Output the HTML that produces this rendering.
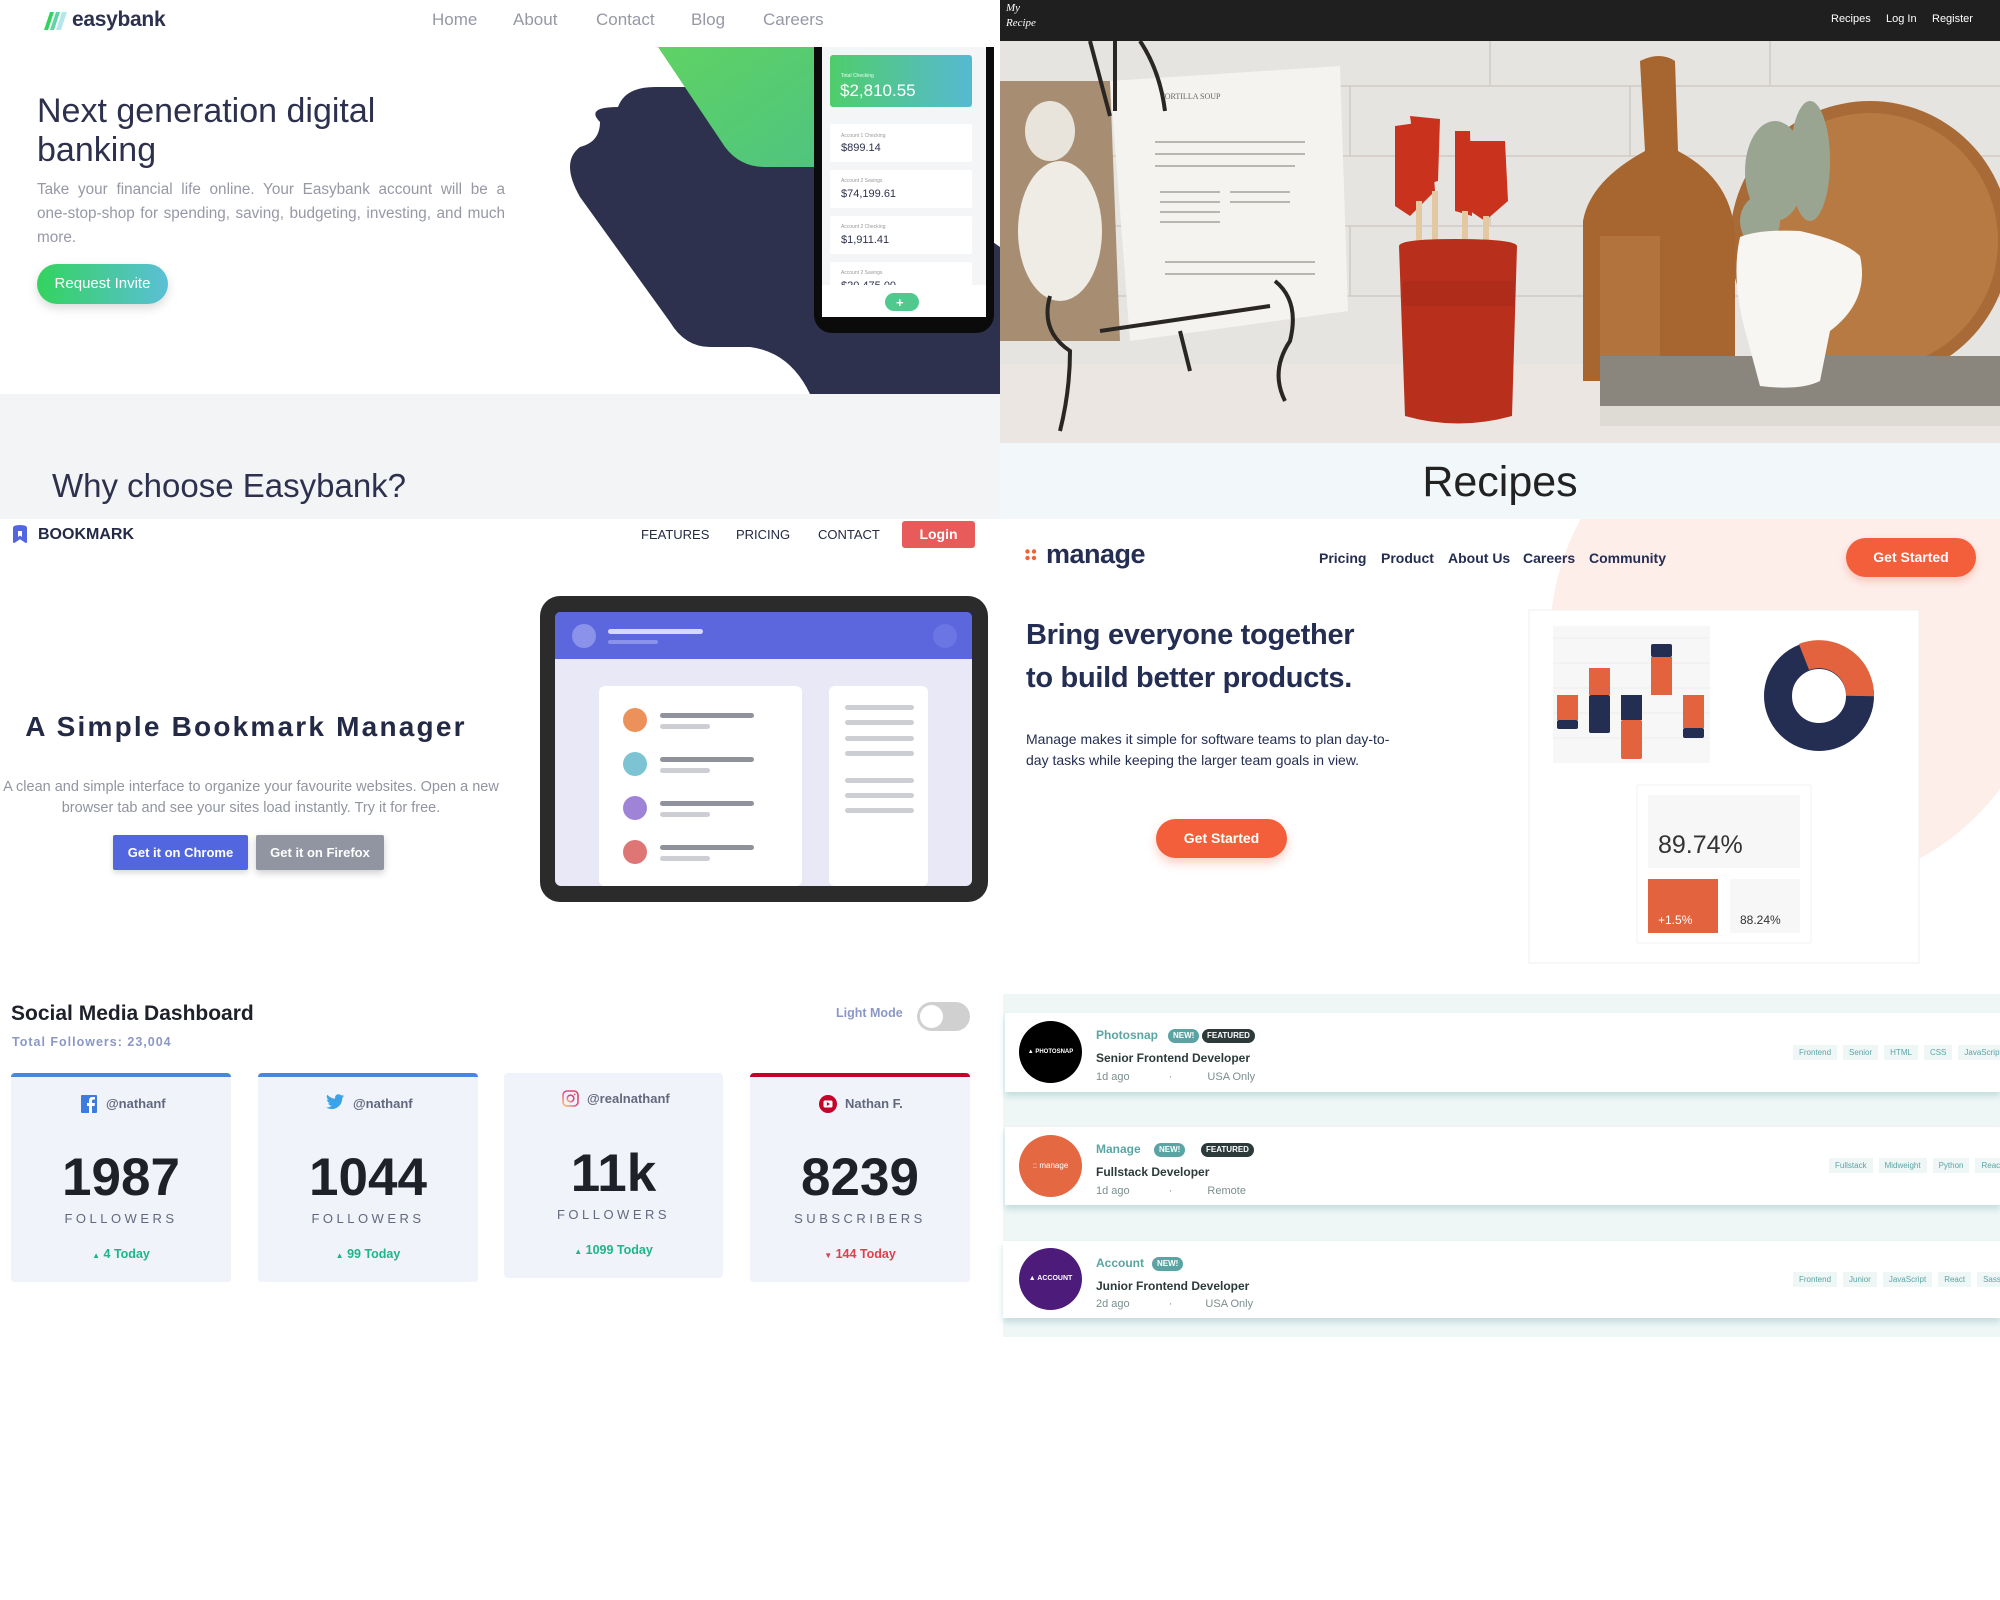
<!DOCTYPE html>
<html><head><meta charset="utf-8"><style>
*{margin:0;padding:0;box-sizing:border-box}
body{width:2000px;height:1600px;position:relative;background:#fff;font-family:"Liberation Sans",sans-serif;overflow:hidden}
.a{position:absolute;white-space:nowrap}
</style></head><body>

<!-- EASYBANK -->
<div class="a" style="left:0;top:0;width:1000px;height:394px;background:#fff"></div>
<svg class="a" style="left:40px;top:11px" width="32" height="20"><polygon points="4,19 10,1 14,1 8,19" fill="#33d35e"/><polygon points="10,19 16,1 20,1 14,19" fill="#5fd3a5"/><polygon points="16,19 22,1 27,1 21,19" fill="#b5e6ea"/></svg>
<div class="a" style="left:72px;top:8px;font-size:21px;font-weight:bold;color:#2d314d;letter-spacing:-0.3px">easybank</div>
<div class="a" style="left:432px;top:10px;font-size:17px;color:#9698a6">Home</div>
<div class="a" style="left:513px;top:10px;font-size:17px;color:#9698a6">About</div>
<div class="a" style="left:596px;top:10px;font-size:17px;color:#9698a6">Contact</div>
<div class="a" style="left:691px;top:10px;font-size:17px;color:#9698a6">Blog</div>
<div class="a" style="left:763px;top:10px;font-size:17px;color:#9698a6">Careers</div>
<div class="a" style="left:37px;top:92px;font-size:34px;line-height:39px;color:#2d314d;white-space:normal;width:420px">Next generation digital banking</div>
<div class="a" style="left:37px;top:178px;font-size:15.3px;line-height:24px;color:#9698a6;white-space:normal;width:468px;text-align:justify">Take your financial life online. Your Easybank account will be a one&#8209;stop&#8209;shop for spending, saving, budgeting, investing, and much more.</div>
<div class="a" style="left:37px;top:264px;width:131px;height:40px;border-radius:20px;background:linear-gradient(90deg,#33d35e,#5bbfd6);color:#fff;font-size:15px;line-height:40px;text-align:center;box-shadow:0 4px 10px rgba(0,0,0,.15)">Request Invite</div>
<svg class="a" style="left:560px;top:47px" width="440" height="348">
<path d="M58,60 Q65,40 95,40 L210,40 Q250,40 270,80 L440,200 L440,347 L250,347 Q230,305 190,300 L150,300 Q125,300 110,275 L20,150 Q0,115 20,100 Q40,95 40,75 Q25,60 58,60 Z" fill="#2d314d"/>
<path d="M98,0 L260,0 L262,120 L205,120 Q180,120 165,100 Z" fill="url(#g1)"/>
<defs><linearGradient id="g1" x1="0" y1="0" x2="1" y2="1"><stop offset="0" stop-color="#5fd264"/><stop offset="1" stop-color="#4fc47f"/></linearGradient><linearGradient id="g2" x1="0" x2="1"><stop offset="0" stop-color="#4fcd6b"/><stop offset="1" stop-color="#56b9d3"/></linearGradient></defs>
<rect x="254" y="-20" width="180" height="306" rx="18" fill="#0b0b0b"/>
<rect x="262" y="-20" width="164" height="290" rx="12" fill="#f4f5f7"/>
<rect x="270" y="8" width="142" height="52" rx="3" fill="url(#g2)"/>
<text x="281" y="30" font-size="5" fill="#e8fff0" font-family="Liberation Sans">Total Checking</text>
<text x="280" y="49" font-size="17" fill="#fff" font-family="Liberation Sans">$2,810.55</text>
<rect x="270" y="77" width="142" height="38" rx="2" fill="#fff"/><text x="281" y="90" font-size="5" fill="#999">Account 1 Checking</text><text x="281" y="104" font-size="11" fill="#2d314d">$899.14</text>
<rect x="270" y="123" width="142" height="38" rx="2" fill="#fff"/><text x="281" y="135" font-size="5" fill="#999">Account 2 Savings</text><text x="281" y="150" font-size="11" fill="#2d314d">$74,199.61</text>
<rect x="270" y="169" width="142" height="38" rx="2" fill="#fff"/><text x="281" y="181" font-size="5" fill="#999">Account 2 Checking</text><text x="281" y="196" font-size="11" fill="#2d314d">$1,911.41</text>
<rect x="270" y="215" width="142" height="30" rx="2" fill="#fff"/><text x="281" y="227" font-size="5" fill="#999">Account 2 Savings</text><text x="281" y="242" font-size="11" fill="#2d314d">$20,475.00</text>
<rect x="262" y="238" width="164" height="32" fill="#fff"/>
<rect x="325" y="246" width="34" height="18" rx="9" fill="#4fc98e"/><text x="336" y="260" font-size="13" fill="#fff" font-weight="bold">+</text>
</svg>
<div class="a" style="left:0;top:394px;width:1000px;height:125px;background:#f3f4f6"></div>
<div class="a" style="left:52px;top:467px;font-size:33px;color:#2d314d">Why choose Easybank?</div>

<!-- RECIPES -->
<div class="a" style="left:1000px;top:0;width:1000px;height:41px;background:#1f1f1f"></div>
<div class="a" style="left:1006px;top:1px;font-family:'Liberation Serif',serif;font-style:italic;font-size:11px;line-height:15px;color:#fff;white-space:normal;width:30px">My<br>Recipe</div>
<div class="a" style="left:1831px;top:13px;font-size:11px;color:#fff">Recipes</div>
<div class="a" style="left:1886px;top:13px;font-size:11px;color:#fff">Log In</div>
<div class="a" style="left:1932px;top:13px;font-size:11px;color:#fff">Register</div>
<svg class="a" style="left:1000px;top:41px" width="1000" height="402">
<rect width="1000" height="402" fill="#e6e4e0"/>
<g stroke="#cfcac4" stroke-width="1.5"><line x1="0" y1="45" x2="1000" y2="45"/><line x1="0" y1="115" x2="1000" y2="115"/><line x1="0" y1="185" x2="1000" y2="185"/><line x1="0" y1="255" x2="1000" y2="255"/><line x1="490" y1="0" x2="490" y2="45"/><line x1="770" y1="0" x2="770" y2="45"/><line x1="350" y1="45" x2="350" y2="115"/><line x1="630" y1="45" x2="630" y2="115"/><line x1="490" y1="115" x2="490" y2="185"/><line x1="350" y1="185" x2="350" y2="255"/><line x1="630" y1="185" x2="630" y2="255"/><line x1="490" y1="255" x2="490" y2="323"/></g>
<rect x="0" y="323" width="1000" height="79" fill="#ebe6e1"/>
<path d="M0,40 L110,40 L120,300 L0,300 Z" fill="#a78e72"/>
<ellipse cx="60" cy="190" rx="42" ry="70" fill="#efece6"/><ellipse cx="50" cy="90" rx="25" ry="30" fill="#e8e4dc"/>
<path d="M110,40 L340,25 L348,270 L130,300 Z" fill="#f4f3f0"/>
<g fill="#b8b6b0"><rect x="155" y="100" width="150" height="2"/><rect x="155" y="112" width="150" height="2"/><rect x="155" y="124" width="140" height="2"/><rect x="160" y="150" width="60" height="2"/><rect x="230" y="150" width="60" height="2"/><rect x="160" y="160" width="60" height="2"/><rect x="230" y="160" width="60" height="2"/><rect x="160" y="170" width="60" height="2"/><rect x="160" y="180" width="60" height="2"/><rect x="165" y="220" width="150" height="2"/><rect x="165" y="232" width="150" height="2"/></g>
<text x="160" y="58" font-size="8" fill="#666" font-family="Liberation Serif">TORTILLA SOUP</text>
<g stroke="#2a2623" stroke-width="4" fill="none"><path d="M90,0 L110,75 M115,0 L115,70 M140,0 Q160,30 165,70"/><path d="M50,255 Q40,290 70,310 Q70,350 60,390 M275,240 Q300,260 290,300 Q270,330 285,360 M180,290 L190,330"/><path d="M100,290 L270,265"/></g>
<g fill="#c9331e"><path d="M395,85 L430,80 L435,150 L410,175 L395,165 Z"/><path d="M410,75 L440,78 L438,140 L420,145 Z"/><path d="M455,90 L470,90 L472,175 L455,170 Z"/><path d="M470,100 L505,100 L508,160 L485,180 L470,170 Z"/></g>
<g fill="#e2c9a3"><rect x="416" y="160" width="6" height="70"/><rect x="432" y="150" width="6" height="80"/><rect x="462" y="170" width="6" height="60"/><rect x="483" y="175" width="6" height="55"/></g>
<path d="M399,205 Q400,198 455,198 Q515,198 517,205 L512,375 Q458,390 405,375 Z" fill="#b8301c"/>
<rect x="403" y="240" width="112" height="25" fill="#a72a18" opacity=".6"/>
<circle cx="870" cy="200" r="140" fill="#a86a36"/><circle cx="870" cy="200" r="128" fill="#b87a43"/>
<path d="M640,20 Q660,10 675,20 L678,110 Q735,140 735,200 L735,340 L583,340 L583,180 Q590,140 645,110 Z" fill="#a7652f"/>
<rect x="600" y="195" width="60" height="140" fill="#bb7d47" opacity=".6"/>
<rect x="600" y="315" width="400" height="70" fill="#8a867e"/><rect x="600" y="365" width="400" height="20" fill="#dedbd4"/>
<g fill="#9aa591"><ellipse cx="775" cy="130" rx="30" ry="50"/><ellipse cx="810" cy="120" rx="20" ry="60"/><ellipse cx="760" cy="180" rx="20" ry="25"/></g>
<path d="M740,196 Q760,188 800,190 Q845,200 860,215 Q870,260 830,290 L820,340 Q800,350 760,345 L748,300 Q730,240 740,196 Z" fill="#f7f6f3"/>
</svg>
<div class="a" style="left:1000px;top:443px;width:1000px;height:76px;background:#f2f8f9"></div>
<div class="a" style="left:1000px;top:458px;width:1000px;text-align:center;font-size:43px;color:#222">Recipes</div>

<!-- BOOKMARK -->
<svg class="a" style="left:10px;top:525px" width="20" height="20"><path d="M4,3 Q4,1 10,1 Q16,1 16,3 L16,17 L10,13 L4,17 Z" fill="#5267df" stroke="#5267df" stroke-width="2" stroke-linejoin="round"/><path d="M8,6 L8,12 L10,10.5 L12,12 L12,6 Z" fill="#fff"/></svg>
<div class="a" style="left:38px;top:526px;font-size:16px;font-weight:bold;color:#242a45;letter-spacing:0">BOOKMARK</div>
<div class="a" style="left:641px;top:527px;font-size:13px;color:#242a45;letter-spacing:0">FEATURES</div>
<div class="a" style="left:736px;top:527px;font-size:13px;color:#242a45;letter-spacing:0">PRICING</div>
<div class="a" style="left:818px;top:527px;font-size:13px;color:#242a45;letter-spacing:0">CONTACT</div>
<div class="a" style="left:902px;top:521px;width:73px;height:27px;background:#e85b5b;color:#fff;font-size:14px;font-weight:bold;line-height:27px;text-align:center;border-radius:3px">Login</div>
<div class="a" style="left:0;top:711px;width:492px;text-align:center;font-size:28px;font-weight:bold;color:#242a45;letter-spacing:2.2px">A Simple Bookmark Manager</div>
<div class="a" style="left:-14px;top:777px;width:530px;text-align:center;font-size:14.5px;line-height:21px;color:#9194a1;white-space:normal">A clean and simple interface to organize your favourite websites. Open a new browser tab and see your sites load instantly. Try it for free.</div>
<div class="a" style="left:113px;top:835px;width:135px;height:35px;background:#5267df;color:#fff;font-size:13px;font-weight:bold;line-height:35px;text-align:center;border-radius:2px;box-shadow:0 3px 6px rgba(0,0,0,.15)">Get it on Chrome</div>
<div class="a" style="left:256px;top:835px;width:128px;height:35px;background:#9194a1;color:#fff;font-size:13px;font-weight:bold;line-height:35px;text-align:center;border-radius:2px;box-shadow:0 3px 8px rgba(0,0,0,.2)">Get it on Firefox</div>
<svg class="a" style="left:538px;top:594px" width="452" height="312">
<rect x="2" y="2" width="448" height="306" rx="20" fill="#2b2b2b"/>
<rect x="17" y="18" width="417" height="274" rx="6" fill="#e9e8f6"/>
<path d="M17,24 Q17,18 23,18 L428,18 Q434,18 434,24 L434,65 L17,65 Z" fill="#5c67de"/>
<circle cx="46" cy="42" r="12" fill="#8a92ea"/><circle cx="407" cy="42" r="12" fill="#6b75e3"/>
<rect x="70" y="35" width="95" height="5" rx="2.5" fill="#d5d9fb"/><rect x="70" y="46" width="50" height="4" rx="2" fill="#8a92ea"/>
<rect x="61" y="92" width="203" height="200" rx="6" fill="#fff"/><rect x="291" y="92" width="99" height="200" rx="6" fill="#fff"/>
<circle cx="97" cy="126" r="12" fill="#ec915a"/><circle cx="97" cy="170" r="12" fill="#7cc4d3"/><circle cx="97" cy="214" r="12" fill="#9f83d6"/><circle cx="97" cy="258" r="12" fill="#de7676"/>
<g fill="#8f919b"><rect x="122" y="119" width="94" height="5" rx="2.5"/><rect x="122" y="163" width="94" height="5" rx="2.5"/><rect x="122" y="207" width="94" height="5" rx="2.5"/><rect x="122" y="251" width="94" height="5" rx="2.5"/></g>
<g fill="#ccced4"><rect x="122" y="130" width="50" height="5" rx="2.5"/><rect x="122" y="174" width="50" height="5" rx="2.5"/><rect x="122" y="218" width="50" height="5" rx="2.5"/><rect x="122" y="262" width="50" height="5" rx="2.5"/>
<rect x="307" y="111" width="69" height="5" rx="2.5"/><rect x="307" y="126" width="69" height="5" rx="2.5"/><rect x="307" y="142" width="69" height="5" rx="2.5"/><rect x="307" y="157" width="69" height="5" rx="2.5"/><rect x="307" y="184" width="69" height="5" rx="2.5"/><rect x="307" y="199" width="69" height="5" rx="2.5"/><rect x="307" y="214" width="69" height="5" rx="2.5"/></g>
</svg>

<!-- MANAGE -->
<svg class="a" style="left:1000px;top:519px" width="1000" height="463">
<circle cx="800" cy="120" r="250" fill="#fdeeea"/>
<polygon points="700,40 1000,-20 1000,150 830,400" fill="#fdeeea"/>
</svg>
<svg class="a" style="left:1025px;top:549px" width="12" height="12"><circle cx="2.5" cy="2.5" r="2.2" fill="#f25f3a"/><circle cx="9" cy="2.5" r="2.2" fill="#f25f3a"/><circle cx="2.5" cy="9" r="2.2" fill="#f25f3a"/><circle cx="9" cy="9" r="2.2" fill="#f25f3a"/></svg>
<div class="a" style="left:1046px;top:539px;font-size:27px;font-weight:bold;color:#242d52;letter-spacing:-0.5px">manage</div>
<div class="a" style="left:1319px;top:550px;font-size:14px;font-weight:bold;color:#242d52">Pricing</div>
<div class="a" style="left:1381px;top:550px;font-size:14px;font-weight:bold;color:#242d52">Product</div>
<div class="a" style="left:1448px;top:550px;font-size:14px;font-weight:bold;color:#242d52">About Us</div>
<div class="a" style="left:1523px;top:550px;font-size:14px;font-weight:bold;color:#242d52">Careers</div>
<div class="a" style="left:1589px;top:550px;font-size:14px;font-weight:bold;color:#242d52">Community</div>
<div class="a" style="left:1846px;top:538px;width:130px;height:39px;border-radius:20px;background:#f25f3a;color:#fff;font-size:14px;font-weight:bold;line-height:39px;text-align:center;box-shadow:0 4px 8px rgba(242,95,58,.3)">Get Started</div>
<div class="a" style="left:1026px;top:614px;font-size:29px;line-height:43px;font-weight:bold;color:#242d52;letter-spacing:-0.3px">Bring everyone together<br>to build better products.</div>
<div class="a" style="left:1026px;top:729px;font-size:14px;line-height:21px;color:#242d52;white-space:normal;width:385px">Manage makes it simple for software teams to plan day-to-day tasks while keeping the larger team goals in view.</div>
<div class="a" style="left:1156px;top:819px;width:131px;height:39px;border-radius:20px;background:#f25f3a;color:#fff;font-size:14px;font-weight:bold;line-height:39px;text-align:center;box-shadow:0 5px 10px rgba(242,95,58,.3)">Get Started</div>
<svg class="a" style="left:1527px;top:608px" width="394" height="358">
<rect x="2" y="2" width="390" height="353" fill="#fff" stroke="#f2eeee"/>
<rect x="16" y="9" width="173" height="158" fill="#fff"/><rect x="204" y="9" width="176" height="158" fill="#fff"/>
<rect x="26" y="18" width="157" height="137" fill="#f7f7f7"/>
<g stroke="#ececec"><line x1="26" y1="30" x2="183" y2="30"/><line x1="26" y1="55" x2="183" y2="55"/><line x1="26" y1="80" x2="183" y2="80"/><line x1="26" y1="105" x2="183" y2="105"/><line x1="26" y1="130" x2="183" y2="130"/></g>
<rect x="30" y="87" width="21" height="25" fill="#e3633e"/><rect x="30" y="112" width="21" height="9" rx="2" fill="#242d52"/>
<rect x="62" y="60" width="21" height="27" fill="#e3633e"/><rect x="62" y="87" width="21" height="38" rx="2" fill="#242d52"/>
<rect x="94" y="87" width="21" height="25" fill="#242d52"/><rect x="94" y="112" width="21" height="39" rx="2" fill="#e3633e"/>
<rect x="124" y="36" width="21" height="13" rx="2" fill="#242d52"/><rect x="124" y="49" width="21" height="38" fill="#e3633e"/>
<rect x="156" y="87" width="21" height="33" fill="#e3633e"/><rect x="156" y="120" width="21" height="10" rx="2" fill="#242d52"/>
<circle cx="292" cy="88" r="41" fill="none" stroke="#242d52" stroke-width="28"/>
<path d="M277,49 A41,41 0 0 1 333,88" fill="none" stroke="#e3633e" stroke-width="28"/>
<rect x="110" y="177" width="174" height="158" fill="#fff" stroke="#f5f3f3"/>
<rect x="121" y="187" width="152" height="73" fill="#f7f7f7"/>
<text x="131" y="245" font-size="25" fill="#333" font-family="Liberation Sans">89.74%</text>
<rect x="121" y="271" width="70" height="54" fill="#e3633e"/><text x="131" y="316" font-size="12" fill="#fff" font-family="Liberation Sans">+1.5%</text>
<rect x="203" y="271" width="70" height="54" fill="#f7f7f7"/><text x="213" y="316" font-size="12" fill="#333" font-family="Liberation Sans">88.24%</text>
</svg>

<!-- SOCIAL -->
<div class="a" style="left:11px;top:1002px;font-size:21px;font-weight:bold;color:#1e202a">Social Media Dashboard</div>
<div class="a" style="left:12px;top:1035px;font-size:12.5px;font-weight:bold;color:#8b97c6;letter-spacing:1px">Total Followers: 23,004</div>
<div class="a" style="left:836px;top:1006px;font-size:12.5px;font-weight:bold;color:#8b97c6">Light Mode</div>
<div class="a" style="left:917px;top:1002px;width:53px;height:29px;border-radius:15px;background:#d0d0d0"><div style="position:absolute;left:3px;top:3px;width:23px;height:23px;border-radius:50%;background:#fff"></div></div>

<div class="a" style="left:11px;top:1073px;width:220px;height:209px;background:#f0f3fa;border-top:4px solid #4488e0;border-radius:4px 4px 3px 3px"></div>
<div class="a" style="left:258px;top:1073px;width:220px;height:209px;background:#f0f3fa;border-top:4px solid #4488e0;border-radius:4px 4px 3px 3px"></div>
<div class="a" style="left:504px;top:1073px;width:219px;height:205px;background:#f0f3fa;border-radius:4px"></div>
<div class="a" style="left:750px;top:1073px;width:220px;height:209px;background:#f0f3fa;border-top:4px solid #c4032a;border-radius:4px 4px 3px 3px"></div>

<svg class="a" style="left:81px;top:1095px" width="16" height="18"><rect width="16" height="18" rx="1" fill="#3c7be0"/><path d="M11,18 L11,11 L13.5,11 L14,8 L11,8 L11,6 Q11,4.5 12.5,4.5 L14,4.5 L14,2 L11.5,2 Q8,2 8,5.5 L8,8 L6,8 L6,11 L8,11 L8,18 Z" fill="#fff"/></svg>
<div class="a" style="left:106px;top:1096px;font-size:13px;font-weight:bold;color:#63687e">@nathanf</div>
<svg class="a" style="left:326px;top:1094px" width="18" height="16"><path d="M18,2 Q17,2.5 16,2.7 Q17.2,2 17.6,0.6 Q16.5,1.3 15.3,1.5 Q13.4,-0.3 10.9,0.6 Q8.7,1.7 9.1,4.6 Q4.6,4.4 1.3,0.7 Q-0.2,3.7 2.6,5.8 Q1.7,5.8 1,5.4 Q1.1,8.3 4,9.1 Q3.1,9.4 2.2,9.2 Q3.1,11.6 5.8,11.8 Q3.2,13.8 0,13.5 Q5,16.5 10.5,14 Q16.4,10.5 16.3,4 Q17.3,3.3 18,2 Z" fill="#3ba3e8"/></svg>
<div class="a" style="left:353px;top:1096px;font-size:13px;font-weight:bold;color:#63687e">@nathanf</div>
<svg class="a" style="left:562px;top:1090px" width="17" height="17"><defs><linearGradient id="ig" x1="0" y1="1" x2="1" y2="0"><stop offset="0" stop-color="#fdc468"/><stop offset=".5" stop-color="#df4996"/><stop offset="1" stop-color="#d45"/></linearGradient></defs><rect x="1" y="1" width="15" height="15" rx="4" fill="none" stroke="url(#ig)" stroke-width="1.6"/><circle cx="8.5" cy="8.5" r="3.3" fill="none" stroke="url(#ig)" stroke-width="1.6"/><circle cx="12.6" cy="4.4" r="0.9" fill="#d45"/></svg>
<div class="a" style="left:587px;top:1091px;font-size:13px;font-weight:bold;color:#63687e">@realnathanf</div>
<svg class="a" style="left:819px;top:1095px" width="18" height="18"><circle cx="9" cy="9" r="9" fill="#c4032a"/><rect x="4.5" y="5.5" width="9" height="7" rx="1.5" fill="#fff"/><path d="M7.8,7 L11,9 L7.8,11 Z" fill="#c4032a"/></svg>
<div class="a" style="left:845px;top:1096px;font-size:13px;font-weight:bold;color:#63687e">Nathan F.</div>

<div class="a" style="left:11px;top:1147px;width:220px;text-align:center;font-size:53px;font-weight:bold;color:#1e202a">1987</div>
<div class="a" style="left:258px;top:1147px;width:220px;text-align:center;font-size:53px;font-weight:bold;color:#1e202a">1044</div>
<div class="a" style="left:504px;top:1143px;width:219px;text-align:center;font-size:53px;font-weight:bold;color:#1e202a">11k</div>
<div class="a" style="left:750px;top:1147px;width:220px;text-align:center;font-size:53px;font-weight:bold;color:#1e202a">8239</div>
<div class="a" style="left:11px;top:1211px;width:220px;text-align:center;font-size:13px;color:#63687e;letter-spacing:3.5px">FOLLOWERS</div>
<div class="a" style="left:258px;top:1211px;width:220px;text-align:center;font-size:13px;color:#63687e;letter-spacing:3.5px">FOLLOWERS</div>
<div class="a" style="left:504px;top:1207px;width:219px;text-align:center;font-size:13px;color:#63687e;letter-spacing:3.5px">FOLLOWERS</div>
<div class="a" style="left:750px;top:1211px;width:220px;text-align:center;font-size:13px;color:#63687e;letter-spacing:3.5px">SUBSCRIBERS</div>
<div class="a" style="left:11px;top:1247px;width:220px;text-align:center;font-size:12.5px;font-weight:bold;color:#1eb589"><span style="font-size:8px">▲</span> 4 Today</div>
<div class="a" style="left:258px;top:1247px;width:220px;text-align:center;font-size:12.5px;font-weight:bold;color:#1eb589"><span style="font-size:8px">▲</span> 99 Today</div>
<div class="a" style="left:504px;top:1243px;width:219px;text-align:center;font-size:12.5px;font-weight:bold;color:#1eb589"><span style="font-size:8px">▲</span> 1099 Today</div>
<div class="a" style="left:750px;top:1247px;width:220px;text-align:center;font-size:12.5px;font-weight:bold;color:#dc414c"><span style="font-size:8px">▼</span> 144 Today</div>

<!-- JOBS -->
<div class="a" style="left:1003px;top:994px;width:997px;height:343px;background:#eff6f6"></div>
<div class="a" style="left:1005px;top:1013px;width:995px;height:79px;background:#fff;box-shadow:0 4px 6px rgba(91,164,164,.3)"></div>
<div class="a" style="left:1005px;top:1127px;width:995px;height:78px;background:#fff;box-shadow:0 4px 6px rgba(91,164,164,.3)"></div>
<div class="a" style="left:1003px;top:1241px;width:997px;height:77px;background:#fff;box-shadow:0 4px 6px rgba(91,164,164,.3)"></div>

<div class="a" style="left:1019px;top:1021px;width:63px;height:62px;border-radius:50%;background:#000;color:#fff;font-size:6px;font-weight:bold;text-align:center;line-height:62px">▲ PHOTOSNAP</div>
<div class="a" style="left:1019px;top:1135px;width:63px;height:62px;border-radius:50%;background:#e46842;color:#fff;font-size:8px;text-align:center;line-height:62px">:: manage</div>
<div class="a" style="left:1019px;top:1248px;width:63px;height:62px;border-radius:50%;background:#4d1b7a;color:#fff;font-size:7px;font-weight:bold;text-align:center;line-height:62px">▲ ACCOUNT</div>

<div class="a" style="left:1096px;top:1028px;font-size:12px;font-weight:bold;color:#5ba4a4">Photosnap</div>
<div class="a" style="left:1168px;top:1029px;padding:0 5px;height:14px;line-height:14px;border-radius:7px;background:#5ba4a4;color:#fff;font-size:8px;font-weight:bold">NEW!</div>
<div class="a" style="left:1202px;top:1029px;padding:0 5px;height:14px;line-height:14px;border-radius:7px;background:#2c3a3a;color:#fff;font-size:8px;font-weight:bold">FEATURED</div>
<div class="a" style="left:1096px;top:1051px;font-size:12px;font-weight:bold;color:#2c3a3a">Senior Frontend Developer</div>
<div class="a" style="left:1096px;top:1071px;font-size:11px;color:#7b8e8e">1d ago <span style="margin:0 32px 0 36px">·</span> USA Only</div>

<div class="a" style="left:1096px;top:1142px;font-size:12px;font-weight:bold;color:#5ba4a4">Manage</div>
<div class="a" style="left:1154px;top:1143px;padding:0 5px;height:14px;line-height:14px;border-radius:7px;background:#5ba4a4;color:#fff;font-size:8px;font-weight:bold">NEW!</div>
<div class="a" style="left:1201px;top:1143px;padding:0 5px;height:14px;line-height:14px;border-radius:7px;background:#2c3a3a;color:#fff;font-size:8px;font-weight:bold">FEATURED</div>
<div class="a" style="left:1096px;top:1165px;font-size:12px;font-weight:bold;color:#2c3a3a">Fullstack Developer</div>
<div class="a" style="left:1096px;top:1185px;font-size:11px;color:#7b8e8e">1d ago <span style="margin:0 32px 0 36px">·</span> Remote</div>

<div class="a" style="left:1096px;top:1256px;font-size:12px;font-weight:bold;color:#5ba4a4">Account</div>
<div class="a" style="left:1152px;top:1257px;padding:0 5px;height:14px;line-height:14px;border-radius:7px;background:#5ba4a4;color:#fff;font-size:8px;font-weight:bold">NEW!</div>
<div class="a" style="left:1096px;top:1279px;font-size:12px;font-weight:bold;color:#2c3a3a">Junior Frontend Developer</div>
<div class="a" style="left:1096px;top:1298px;font-size:11px;color:#7b8e8e">2d ago <span style="margin:0 30px 0 36px">·</span> USA Only</div>

<div class="a" style="left:1793px;top:1045px;font-size:8px;color:#5ba4a4;display:flex;gap:6px">
<span style="background:#eff6f6;padding:3px 6px">Frontend</span><span style="background:#eff6f6;padding:3px 6px">Senior</span><span style="background:#eff6f6;padding:3px 6px">HTML</span><span style="background:#eff6f6;padding:3px 6px">CSS</span><span style="background:#eff6f6;padding:3px 6px">JavaScript</span></div>
<div class="a" style="left:1829px;top:1158px;font-size:8px;color:#5ba4a4;display:flex;gap:6px">
<span style="background:#eff6f6;padding:3px 6px">Fullstack</span><span style="background:#eff6f6;padding:3px 6px">Midweight</span><span style="background:#eff6f6;padding:3px 6px">Python</span><span style="background:#eff6f6;padding:3px 6px">React</span></div>
<div class="a" style="left:1793px;top:1272px;font-size:8px;color:#5ba4a4;display:flex;gap:6px">
<span style="background:#eff6f6;padding:3px 6px">Frontend</span><span style="background:#eff6f6;padding:3px 6px">Junior</span><span style="background:#eff6f6;padding:3px 6px">JavaScript</span><span style="background:#eff6f6;padding:3px 6px">React</span><span style="background:#eff6f6;padding:3px 6px">Sass</span></div>

</body></html>
